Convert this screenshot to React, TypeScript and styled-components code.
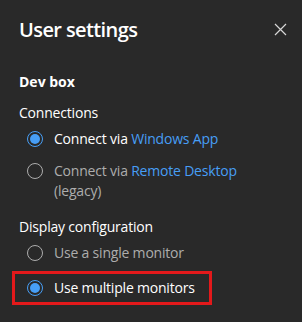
import React from 'react'
import styled, { createGlobalStyle } from 'styled-components'

const Global = createGlobalStyle`
  html, body {
    margin: 0;
    background: #292929;
  }
  body {
    font-family: 'Open Sans', 'Noto Sans', sans-serif;
    color: #ffffff;
  }
`

const Panel = styled.div`
  width: 302px;
  height: 322px;
  box-sizing: border-box;
  padding: 15px 0 0 19px;
  background: #292929;
`

const Header = styled.div`
  display: flex;
  align-items: center;
  justify-content: space-between;
  padding-right: 14px;
  height: 28px;
`

const Title = styled.h1`
  margin: 0;
  font-size: 20px;
  font-weight: 600;
  letter-spacing: -0.6px;
`

const Close = styled.button`
  display: flex;
  align-items: center;
  justify-content: center;
  width: 16px;
  height: 16px;
  padding: 0;
  border: 0;
  background: none;
  color: #d6d6d6;
`

const Section = styled.h2`
  margin: 29px 0 0;
  font-size: 14px;
  font-weight: 700;
  line-height: 20px;
`

const GroupLabel = styled.div<{ $top: number }>`
  margin-top: ${(p) => p.$top}px;
  font-size: 14px;
  line-height: 20px;
  letter-spacing: -0.2px;
`

const Options = styled.div`
  display: flex;
  flex-direction: column;
`

const Option = styled.label<{ $checked?: boolean; $boxed?: boolean }>`
  display: flex;
  align-items: flex-start;
  gap: 11px;
  padding: ${(p) => (p.$boxed ? '4px 14px 4px 12px' : '6px 0 6px 8px')};
  margin-left: ${(p) => (p.$boxed ? '-7px' : '0')};
  margin-top: ${(p) => (p.$boxed ? '2px' : '0')};
  align-self: flex-start;
  border: ${(p) => (p.$boxed ? '3px solid #e3191b' : '0')};
  font-size: 14px;
  line-height: 20px;
  letter-spacing: -0.2px;
  color: ${(p) => (p.$checked ? '#ffffff' : '#adadad')};
`

const Ring = styled.span<{ $checked?: boolean }>`
  flex: none;
  box-sizing: border-box;
  width: 16px;
  height: 16px;
  margin-top: 2px;
  border-radius: 50%;
  border: 1px solid ${(p) => (p.$checked ? '#479ef5' : '#adadad')};
  display: flex;
  align-items: center;
  justify-content: center;
  &::after {
    content: '';
    display: ${(p) => (p.$checked ? 'block' : 'none')};
    width: 10px;
    height: 10px;
    border-radius: 50%;
    background: #479ef5;
  }
`

const Link = styled.span`
  color: #479ef5;
`

const Radio = ({
  checked,
  boxed,
  children,
}: {
  checked?: boolean
  boxed?: boolean
  children: React.ReactNode
}) => (
  <Option $checked={checked} $boxed={boxed}>
    <Ring $checked={checked} />
    <span>{children}</span>
  </Option>
)

export default function App() {
  return (
    <Panel>
      <Global />
      <Header>
        <Title>User settings</Title>
        <Close aria-label="Close">
          <svg width="13" height="13" viewBox="0 0 13 13">
            <path d="M1 1 L12 12 M12 1 L1 12" stroke="currentColor" strokeWidth="1.2" />
          </svg>
        </Close>
      </Header>
      <Section>Dev box</Section>
      <GroupLabel $top={11}>Connections</GroupLabel>
      <Options>
        <Radio checked>
          Connect via <Link>Windows App</Link>
        </Radio>
        <Radio>
          Connect via <Link>Remote Desktop</Link>
          <br />
          (legacy)
        </Radio>
      </Options>
      <GroupLabel $top={10}>Display configuration</GroupLabel>
      <Options>
        <Radio>Use a single monitor</Radio>
        <Radio checked boxed>
          Use multiple monitors
        </Radio>
      </Options>
    </Panel>
  )
}
